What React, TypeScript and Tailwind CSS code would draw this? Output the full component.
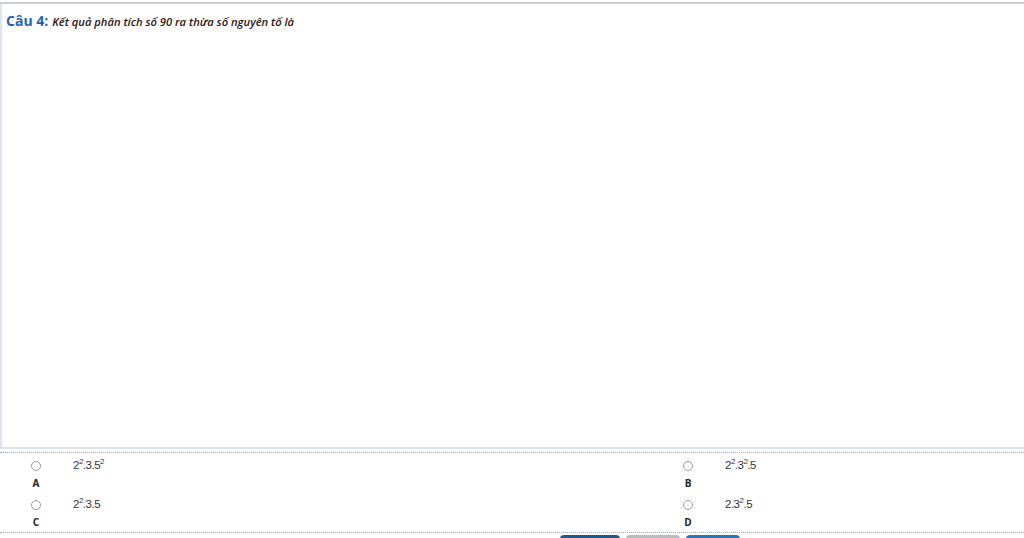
import React from "react";

type Opt = { key: string; content: React.ReactNode };

function Sup({ children }: { children: React.ReactNode }) {
  return <sup className="text-[8px] -top-[5px]">{children}</sup>;
}

function Option({ o }: { o: Opt }) {
  return (
    <div className="flex flex-col h-[40px]">
      <div className="flex items-center h-[22px]">
        <div className="w-[72px] flex justify-center">
          <span className="w-[10px] h-[10px] rounded-full border border-[#9a9a9a] bg-white" />
        </div>
        <span className="pl-[1px] text-[11.5px] text-[#333] font-['Liberation_Sans',sans-serif] tracking-[-0.5px]">
          {o.content}
        </span>
      </div>
      <div className="w-[72px] text-center text-[10px] font-bold text-[#222] leading-[12px] font-['Open_Sans',sans-serif]">
        {o.key}
      </div>
    </div>
  );
}

export default function App() {
  const left: Opt[] = [
    { key: "A", content: <>2<Sup>2</Sup>.3.5<Sup>2</Sup></> },
    { key: "C", content: <>2<Sup>2</Sup>.3.5</> },
  ];
  const right: Opt[] = [
    { key: "B", content: <>2<Sup>2</Sup>.3<Sup>2</Sup>.5</> },
    { key: "D", content: <>2.3<Sup>2</Sup>.5</> },
  ];

  return (
    <main className="w-[1024px] h-[538px] bg-white overflow-hidden font-['Open_Sans',sans-serif]">
      <div className="h-[2px]" />
      <div className="h-[2px] bg-[#c9ced4]" />
      <div className="h-[445px] border-l-2 border-b-2 border-[#dde5ec] pl-[4px] pt-[6px]">
        <div className="flex items-baseline gap-[4px]">
          <span className="text-[14px] font-bold text-[#1d63b8]">Câu 4:</span>
          <span className="text-[11.2px] font-semibold italic text-[#2a1414]">
            Kết quả phân tích số 90 ra thừa số nguyên tố là
          </span>
        </div>
      </div>
      <div className="h-[3px]" />
      <div className="border-t border-dotted border-[#8fa9b8] h-[80px] flex pt-[2px]">
        <div className="w-[652px] flex flex-col">
          {left.map((o) => (
            <Option key={o.key} o={o} />
          ))}
        </div>
        <div className="flex-1 flex flex-col">
          {right.map((o) => (
            <Option key={o.key} o={o} />
          ))}
        </div>
      </div>
      <div className="border-t border-dotted border-[#8fa9b8]" />
      <div className="flex pt-[2px] pl-[560px] gap-[6px]">
        <div className="w-[60px] h-[4px] bg-[#1e5a8a] rounded-t-sm" />
        <div className="w-[54px] h-[4px] bg-[#b8bcc0] rounded-t-sm" />
        <div className="w-[54px] h-[4px] bg-[#2a74b8] rounded-t-sm" />
      </div>
    </main>
  );
}
